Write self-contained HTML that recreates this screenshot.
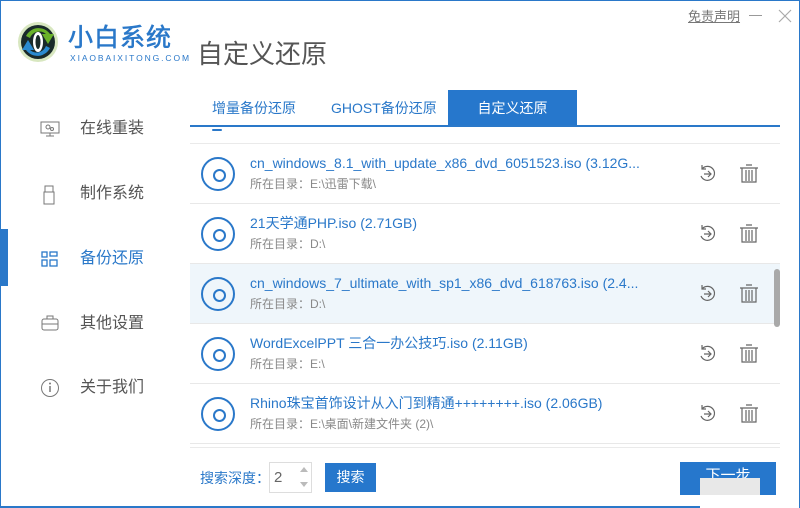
<!DOCTYPE html>
<html><head><meta charset="utf-8"><style>
*{margin:0;padding:0;box-sizing:border-box}
body{width:800px;height:508px;overflow:hidden;background:#fff;font-family:"Liberation Sans","Noto Sans CJK SC",sans-serif;position:relative}
.a{position:absolute}
.frame{left:0;top:0;width:800px;height:508px;border:1px solid #2a78c9;border-bottom:none}
.nav{left:80px;font-size:16px;color:#555;line-height:20px}
.ni{left:40px}
.row{left:190px;width:590px;height:60px;border-bottom:1px solid #e8e8e8}
.disc{left:11px;top:13px;width:34px;height:34px;border:2.5px solid #2a78c9;border-radius:50%}
.disc:after{content:"";position:absolute;left:10px;top:10px;width:9px;height:9px;border:2.5px solid #2a78c9;border-radius:50%}
.t{left:60px;top:10px;font-size:14px;line-height:18px;color:#2a78c9;white-space:nowrap}
.s{left:60px;top:33px;font-size:12px;line-height:15px;color:#888;white-space:nowrap}
.ic{top:20px}
</style></head><body>
<div class="a frame"></div>
<!-- logo -->
<svg class="a" style="left:16px;top:20px" width="44" height="44" viewBox="0 0 44 44">
<circle cx="22" cy="22" r="20" fill="#d8e7c0"/>
<circle cx="22" cy="22" r="17" fill="#1a2a2a"/>
<path d="M10 16 A14 14 0 0 1 34 14 L38 14 L32 24 L26 14 L30 14 A10 10 0 0 0 14 18Z" fill="#6ab22a"/>
<path d="M34 28 A14 14 0 0 1 10 30 L6 30 L12 20 L18 30 L14 30 A10 10 0 0 0 30 26Z" fill="#2a8ad0"/>
<ellipse cx="22" cy="22" rx="5" ry="10" fill="#fff"/>
<ellipse cx="22" cy="22" rx="2.5" ry="7" fill="#1a2a2a"/>
</svg>
<div class="a" style="left:68px;top:23px;font-size:25px;line-height:30px;color:#2a78c9;letter-spacing:1px;-webkit-text-stroke:0.6px #2a78c9">小白系统</div>
<div class="a" style="left:70px;top:53px;font-size:8.5px;line-height:10px;color:#2a78c9;letter-spacing:1.9px">XIAOBAIXITONG.COM</div>
<div class="a" style="left:197px;top:38px;font-size:26px;line-height:32px;color:#555">自定义还原</div>
<div class="a" style="left:688px;top:6px;font-size:13px;color:#777;text-decoration:underline">免责声明</div>
<div class="a" style="left:749px;top:15px;width:13px;height:1px;background:#999"></div>
<svg class="a" style="left:778px;top:9px" width="14" height="14"><path d="M1 1L13 13M13 1L1 13" stroke="#aaa" stroke-width="1.2"/></svg>
<!-- sidebar -->
<div class="a" style="left:0;top:229px;width:8px;height:57px;background:#2a78c9"></div>
<svg class="a ni" style="top:121px" width="20" height="16"><rect x="1" y="1" width="18" height="11" fill="none" stroke="#777"/><circle cx="8" cy="6" r="2" fill="none" stroke="#777"/><circle cx="12" cy="8" r="1.5" fill="none" stroke="#777"/><path d="M10 12v3M6 15h8" stroke="#777"/></svg>
<div class="a nav" style="top:119px">在线重装</div>
<svg class="a ni" style="top:185px" width="20" height="20"><rect x="5" y="1" width="8" height="6" fill="none" stroke="#777"/><rect x="4" y="7" width="10" height="12" fill="none" stroke="#777"/></svg>
<div class="a nav" style="top:184px">制作系统</div>
<svg class="a ni" style="top:250px" width="20" height="18"><g fill="none" stroke="#2a78c9" stroke-width="1.3"><rect x="2" y="2" width="5" height="5"/><rect x="10" y="2" width="7" height="4"/><rect x="2" y="10" width="5" height="6"/><rect x="10" y="10" width="7" height="6"/></g></svg>
<div class="a nav" style="top:249px;color:#2a78c9">备份还原</div>
<svg class="a ni" style="top:314px" width="20" height="18"><g fill="none" stroke="#777"><rect x="2" y="5" width="16" height="11" rx="2"/><path d="M7 5V2h6v3M2 10h16"/></g></svg>
<div class="a nav" style="top:314px">其他设置</div>
<svg class="a ni" style="top:378px" width="20" height="20"><circle cx="10" cy="10" r="8.5" fill="none" stroke="#777"/><path d="M10 8v6" stroke="#777" stroke-width="1.5"/><circle cx="10" cy="5.5" r="1" fill="#777"/></svg>
<div class="a nav" style="top:378px">关于我们</div>
<!-- tabs -->
<div class="a" style="left:212px;top:99px;font-size:14px;line-height:18px;color:#2a78c9">增量备份还原</div>
<div class="a" style="left:331px;top:99px;font-size:14px;line-height:18px;color:#2a78c9">GHOST备份还原</div>
<div class="a" style="left:448px;top:90px;width:129px;height:35px;background:#2677cc;color:#fff;font-size:14px;text-align:center;line-height:37px">自定义还原</div>
<div class="a" style="left:190px;top:125px;width:590px;height:2px;background:#2a78c9"></div>
<div class="a" style="left:212px;top:129px;width:10px;height:2px;background:#2a78c9;border-radius:1px"></div>
<div class="a" style="left:190px;top:143px;width:590px;height:1px;background:#eaeaea"></div>
<!-- rows -->
<div class="a row" style="top:144px"><div class="a disc"></div><div class="a t">cn_windows_8.1_with_update_x86_dvd_6051523.iso (3.12G...</div><div class="a s">所在目录：E:\迅雷下载\</div>
<svg class="a ic" style="left:508px" width="20" height="20"><g fill="none" stroke="#666" stroke-width="1.2"><path d="M4 5A7 7 0 1 1 3 12"/><path d="M4 1v4h4M6 10h7M10 7l3 3-3 3"/></g></svg>
<svg class="a ic" style="left:549px" width="20" height="20"><g fill="none" stroke="#666" stroke-width="1.2"><path d="M1 4h18M7 1h6M3 4v14h14V4M7 6v11M10 6v11M13 6v11"/></g></svg></div>
<div class="a row" style="top:204px"><div class="a disc"></div><div class="a t">21天学通PHP.iso (2.71GB)</div><div class="a s">所在目录：D:\</div>
<svg class="a ic" style="left:508px" width="20" height="20"><g fill="none" stroke="#666" stroke-width="1.2"><path d="M4 5A7 7 0 1 1 3 12"/><path d="M4 1v4h4M6 10h7M10 7l3 3-3 3"/></g></svg>
<svg class="a ic" style="left:549px" width="20" height="20"><g fill="none" stroke="#666" stroke-width="1.2"><path d="M1 4h18M7 1h6M3 4v14h14V4M7 6v11M10 6v11M13 6v11"/></g></svg></div>
<div class="a row" style="top:264px;background:#eff6fb"><div class="a disc"></div><div class="a t">cn_windows_7_ultimate_with_sp1_x86_dvd_618763.iso (2.4...</div><div class="a s">所在目录：D:\</div>
<svg class="a ic" style="left:508px" width="20" height="20"><g fill="none" stroke="#666" stroke-width="1.2"><path d="M4 5A7 7 0 1 1 3 12"/><path d="M4 1v4h4M6 10h7M10 7l3 3-3 3"/></g></svg>
<svg class="a ic" style="left:549px" width="20" height="20"><g fill="none" stroke="#666" stroke-width="1.2"><path d="M1 4h18M7 1h6M3 4v14h14V4M7 6v11M10 6v11M13 6v11"/></g></svg></div>
<div class="a row" style="top:324px"><div class="a disc"></div><div class="a t">WordExcelPPT 三合一办公技巧.iso (2.11GB)</div><div class="a s">所在目录：E:\</div>
<svg class="a ic" style="left:508px" width="20" height="20"><g fill="none" stroke="#666" stroke-width="1.2"><path d="M4 5A7 7 0 1 1 3 12"/><path d="M4 1v4h4M6 10h7M10 7l3 3-3 3"/></g></svg>
<svg class="a ic" style="left:549px" width="20" height="20"><g fill="none" stroke="#666" stroke-width="1.2"><path d="M1 4h18M7 1h6M3 4v14h14V4M7 6v11M10 6v11M13 6v11"/></g></svg></div>
<div class="a row" style="top:384px"><div class="a disc"></div><div class="a t">Rhino珠宝首饰设计从入门到精通++++++++.iso (2.06GB)</div><div class="a s">所在目录：E:\桌面\新建文件夹 (2)\</div>
<svg class="a ic" style="left:508px" width="20" height="20"><g fill="none" stroke="#666" stroke-width="1.2"><path d="M4 5A7 7 0 1 1 3 12"/><path d="M4 1v4h4M6 10h7M10 7l3 3-3 3"/></g></svg>
<svg class="a ic" style="left:549px" width="20" height="20"><g fill="none" stroke="#666" stroke-width="1.2"><path d="M1 4h18M7 1h6M3 4v14h14V4M7 6v11M10 6v11M13 6v11"/></g></svg></div>
<div class="a" style="left:190px;top:447px;width:590px;height:1px;background:#eaeaea"></div>
<div class="a" style="left:774px;top:269px;width:6px;height:58px;background:#a9a9a9;border-radius:3px"></div>
<!-- bottom -->
<div class="a" style="left:200px;top:469px;font-size:14px;line-height:18px;color:#2a78c9">搜索深度：</div>
<div class="a" style="left:269px;top:462px;width:43px;height:31px;border:1px solid #ddd;font-size:15px;color:#666;padding:6px 0 0 4px">2</div>
<div class="a" style="left:300px;top:467px;width:0;height:0;border:4px solid transparent;border-bottom:5px solid #bbb;border-top:none"></div>
<div class="a" style="left:300px;top:482px;width:0;height:0;border:4px solid transparent;border-top:5px solid #bbb;border-bottom:none"></div>
<div class="a" style="left:325px;top:463px;width:51px;height:29px;background:#2677cc;color:#fff;font-size:14px;text-align:center;line-height:29px">搜索</div>
<div class="a" style="left:680px;top:462px;width:96px;height:33px;background:#2677cc;color:#fff;font-size:15px;text-align:center;line-height:28px">下一步</div>
<div class="a" style="left:700px;top:478px;width:60px;height:17px;background:#e8e8e8"></div>
<div class="a" style="left:0;top:506px;width:700px;height:2px;background:#2a78c9"></div>
</body></html>
